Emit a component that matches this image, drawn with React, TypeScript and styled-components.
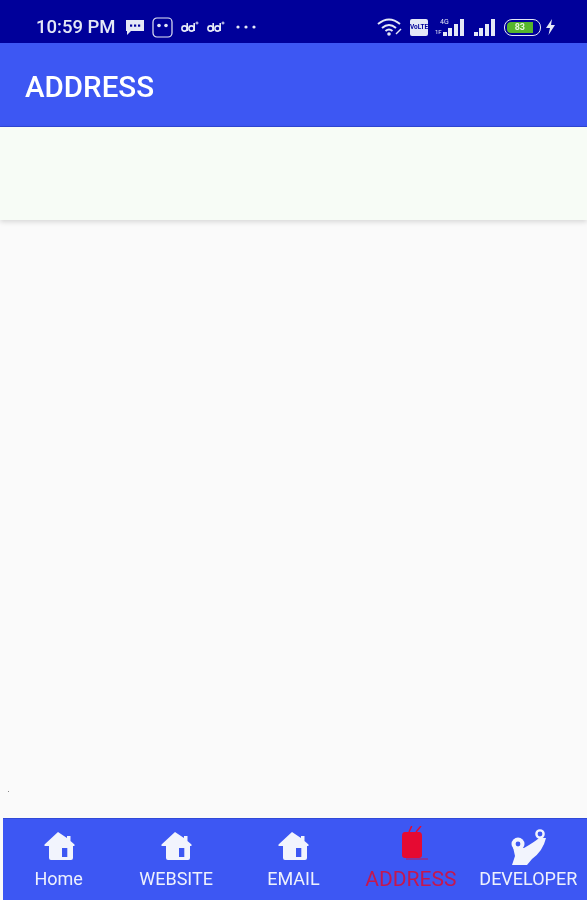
import React from 'react';
import styled, { createGlobalStyle } from 'styled-components';

const GlobalStyle = createGlobalStyle`
  html, body {
    margin: 0;
    padding: 0;
    background: #fafafa;
    font-family: Roboto, "Liberation Sans", sans-serif;
  }
`;

const Screen = styled.div`
  display: flex;
  flex-direction: column;
  width: 587px;
  height: 900px;
  overflow: hidden;
  background: #fafafa;
`;

const StatusBar = styled.div`
  display: flex;
  flex: 0 0 43px;
  justify-content: space-between;
  align-items: center;
  box-sizing: border-box;
  padding: 11px 31px 0 36px;
  background: #00009a;
  color: #e4e8f6;
  filter: blur(0.5px);
`;

const StatusGroup = styled.div<{ $gap: number }>`
  display: flex;
  align-items: center;
  gap: ${({ $gap }) => $gap}px;
`;

const Clock = styled.span`
  margin-right: 2px;
  font-weight: 500;
  font-size: 18.5px;
  white-space: nowrap;
`;

const AppBar = styled.header`
  display: flex;
  flex: 0 0 84px;
  align-items: center;
  box-sizing: border-box;
  padding: 6px 0 0 25px;
  background: #3d57f3;
  border-bottom: 1px solid #2f47d6;
  box-shadow: 0 1px 2px rgba(20, 30, 120, 0.3);
`;

const Title = styled.h1`
  margin: 0;
  color: #fff;
  font-weight: 500;
  font-size: 29.5px;
  line-height: 1;
  filter: blur(0.4px);
`;

const Banner = styled.section`
  flex: 0 0 93px;
  background: #f7fcf6;
  box-shadow: 0 2px 5px rgba(0, 0, 0, 0.14);
`;

const Content = styled.main`
  position: relative;
  flex: 1;
`;

const Speck = styled.span`
  position: absolute;
  bottom: 26px;
  left: 8px;
  width: 1px;
  height: 1px;
  background: #888;
`;

const BottomNav = styled.nav`
  flex: 0 0 82px;
  box-sizing: border-box;
  margin-left: 3px;
  padding-top: 7px;
  background: #3d57f3;
  border-top: 1px solid #3049d8;
`;

const NavGrid = styled.div`
  display: grid;
  grid-template-columns: repeat(5, 1fr);
  width: 587px;
  margin-left: -3px;
`;

const NavItem = styled.div<{ $active?: boolean }>`
  display: flex;
  flex-direction: column;
  align-items: center;
  gap: 2px;
  color: ${({ $active }) => ($active ? '#e60a32' : '#f2f4fd')};
  filter: blur(0.4px);
`;

const IconSlot = styled.div`
  display: flex;
  justify-content: center;
  align-items: center;
  height: 40px;
`;

const NavLabel = styled.span<{ $active?: boolean }>`
  color: ${({ $active }) => ($active ? '#c4174f' : '#eef1fc')};
  font-size: ${({ $active }) => ($active ? 21 : 18)}px;
  line-height: 22px;
  white-space: nowrap;
`;

const HomeIcon = () => (
  <svg width="32" height="32" viewBox="0 0 32 32" display="block">
    <path
      fill="currentColor"
      d="M15 2 L24 8 V6 H27.5 V11 L31.5 14.5 V16 H30 V28 Q30 30 28 30 H8 Q6 30 6 28 V16 H1.5 V14.5 Z"
    />
    <rect x="19" y="18" width="5.3" height="9" fill="#3d57f3" />
  </svg>
);

const BagIcon = () => (
  <svg width="34" height="40" viewBox="0 0 34 40" display="block">
    <path
      fill="currentColor"
      d="M11 6 H25 Q28 6 28 10 V29 Q28 32 25 32 H11 Q8 32 8 29 V10 Q8 6 11 6 Z"
    />
    <path
      stroke="currentColor"
      strokeWidth="1.5"
      fill="none"
      d="M17.7 0 L15 6 M27 0 L22 6"
    />
    <path stroke="#c4174f" strokeWidth="1" fill="none" d="M12 33 H34" />
  </svg>
);

const ArmIcon = () => (
  <svg width="36" height="40" viewBox="0 0 36 40" display="block">
    <path
      fill="currentColor"
      d="M3 21 L5 30 L2 39 H17 L22 33 Q33 25 36 12 H29 Q26 15 14 22 Z"
    />
    <circle cx="8" cy="18" r="6.5" fill="currentColor" />
    <circle cx="8" cy="18" r="2.4" fill="#3d57f3" />
    <circle cx="30" cy="8" r="3.6" fill="none" stroke="currentColor" strokeWidth="2.4" />
  </svg>
);

const WifiIcon = () => (
  <svg width="26" height="18" viewBox="0 0 26 18">
    <g fill="none" stroke="currentColor" strokeWidth="2">
      <path d="M1 6 Q12 -3 23 6" />
      <path d="M5 10 Q12 4 19 10" />
      <path d="M8.5 13 Q12 10 15.5 13" />
    </g>
    <circle cx="12" cy="16" r="1.8" fill="currentColor" />
    <path d="M19 16 L24 11" stroke="currentColor" strokeWidth="1.5" />
  </svg>
);

const ChatIcon = () => (
  <svg width="20" height="18" viewBox="0 0 20 18">
    <path fill="currentColor" d="M1 2 H19 V13 H6 L2 17 V13 H1 Z" />
    <g fill="#00009a">
      <rect x="5" y="6.5" width="2.2" height="2.2" />
      <rect x="9" y="6.5" width="2.2" height="2.2" />
      <rect x="13" y="6.5" width="2.2" height="2.2" />
    </g>
  </svg>
);

const FaceIcon = () => (
  <svg width="21" height="21" viewBox="0 0 21 21">
    <rect x="1" y="1" width="19" height="19" rx="4" fill="none" stroke="currentColor" strokeWidth="1.2" />
    <circle cx="7" cy="8.5" r="1.8" fill="currentColor" />
    <circle cx="14" cy="8.5" r="1.8" fill="currentColor" />
  </svg>
);

const SimIcon = () => (
  <svg width="19" height="12" viewBox="0 0 18 12">
    <g fill="none" stroke="currentColor" strokeWidth="1.6">
      <circle cx="4" cy="7.5" r="2.6" />
      <circle cx="11" cy="7.5" r="2.6" />
      <path d="M6.7 2 V10 M13.7 2 V10" />
    </g>
    <path d="M15 2 H18 M16.5 0.5 V3.5" stroke="currentColor" strokeWidth="1" />
  </svg>
);

const MoreDots = styled.svg`
  margin-left: 4px;
`;

const MoreIcon = () => (
  <MoreDots width="20" height="4" viewBox="0 0 20 4" fill="currentColor">
    <circle cx="2" cy="2" r="1.6" />
    <circle cx="10" cy="2" r="1.6" />
    <circle cx="18" cy="2" r="1.6" />
  </MoreDots>
);

const VolteBadge = styled.span`
  display: flex;
  justify-content: center;
  align-items: center;
  width: 18px;
  height: 17px;
  border-radius: 2px;
  background: #e4e8f6;
  color: #00009a;
  font-weight: 700;
  font-size: 6.5px;
  line-height: 7px;
  text-align: center;
`;

const Signal = ({ label }: { label?: boolean }) => (
  <svg width={label ? 31 : 24} height="20" viewBox={label ? '-7 0 31 20' : '0 0 24 20'}>
    {label && (
      <text x="-2" y="7" fontSize="7" fill="currentColor" fontFamily="Roboto">
        4G
      </text>
    )}
    {label && (
      <text x="-7" y="17" fontSize="6" fill="currentColor" fontFamily="Roboto">
        1F
      </text>
    )}
    <g fill="currentColor">
      <rect x="1" y="15" width="4" height="4" />
      <rect x="6" y="11" width="4" height="8" />
      <rect x="12" y="7" width="4" height="12" />
      <rect x="18" y="2" width="4" height="17" />
    </g>
  </svg>
);

const Battery = styled.span`
  display: flex;
  align-items: center;
  box-sizing: border-box;
  width: 37px;
  height: 17px;
  padding: 2px;
  border: 1.5px solid #e4e8f6;
  border-radius: 8px;
`;

const BatteryFill = styled.span`
  display: flex;
  justify-content: center;
  align-items: center;
  width: 83%;
  height: 100%;
  border-radius: 4px 0 0 4px;
  background: #55b52c;
  color: #e4f6da;
  font-weight: 700;
  font-size: 9px;
`;

const Bolt = styled.svg`
  margin-left: -3px;
`;

const BoltIcon = () => (
  <Bolt width="11" height="16" viewBox="0 0 11 16">
    <path fill="currentColor" d="M7 0 L1 9 H5 L3.5 16 L10 6 H6 Z" />
  </Bolt>
);

const tabs = [
  { label: 'Home', icon: <HomeIcon /> },
  { label: 'WEBSITE', icon: <HomeIcon /> },
  { label: 'EMAIL', icon: <HomeIcon /> },
  { label: 'ADDRESS', icon: <BagIcon />, active: true },
  { label: 'DEVELOPER', icon: <ArmIcon /> },
];

export default function App() {
  return (
    <Screen>
      <GlobalStyle />
      <StatusBar>
        <StatusGroup $gap={7}>
          <Clock>10:59 PM</Clock>
          <ChatIcon />
          <FaceIcon />
          <SimIcon />
          <SimIcon />
          <MoreIcon />
        </StatusGroup>
        <StatusGroup $gap={7}>
          <WifiIcon />
          <VolteBadge>VoLTE</VolteBadge>
          <Signal label />
          <Signal />
          <Battery>
            <BatteryFill>83</BatteryFill>
          </Battery>
          <BoltIcon />
        </StatusGroup>
      </StatusBar>
      <AppBar>
        <Title>ADDRESS</Title>
      </AppBar>
      <Banner />
      <Content>
        <Speck />
      </Content>
      <BottomNav>
        <NavGrid>
          {tabs.map((tab) => (
            <NavItem key={tab.label} $active={tab.active}>
              <IconSlot>{tab.icon}</IconSlot>
              <NavLabel $active={tab.active}>{tab.label}</NavLabel>
            </NavItem>
          ))}
        </NavGrid>
      </BottomNav>
    </Screen>
  );
}
